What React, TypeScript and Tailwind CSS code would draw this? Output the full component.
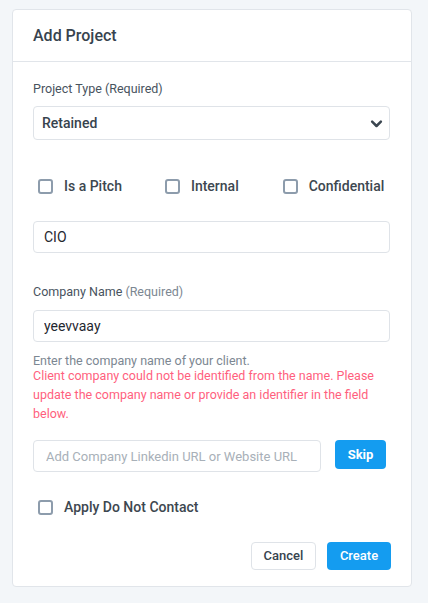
import React, { useState } from 'react';

const Check: React.FC<{ label: string; checked: boolean; onToggle: () => void; className?: string }> = ({ label, checked, onToggle, className }) => (
    <label onClick={onToggle} className={`flex items-center h-5 cursor-pointer ${className || ''}`}>
        <span className={`w-[15px] h-[15px] rounded-[3px] border-2 ${checked ? 'bg-[#149cf0] border-[#149cf0]' : 'border-[#8d9cac] bg-white'}`} />
        <span className="ml-[11px] text-[14px] font-medium text-[#3d4750]">{label}</span>
    </label>
);

export default function App() {
    const [pitch, setPitch] = useState(false);
    const [internal, setInternal] = useState(false);
    const [confidential, setConfidential] = useState(false);
    const [dnc, setDnc] = useState(false);

    return (
        <div className="min-h-[603px] bg-[#f3f6f9] pt-[9px] px-[12px] pb-[17px]" style={{ fontFamily: 'Roboto, "Noto Sans", sans-serif' }}>
            <div className="w-[400px] bg-white border border-[#e1e5ea] rounded-[4px]">
                {/* header */}
                <div className="h-[52px] flex items-center px-[20px] border-b border-[#e1e5ea]">
                    <h2 className="text-[16px] font-medium text-[#37434e]">Add Project</h2>
                </div>

                <div className="px-[20px] pt-[18px] pb-[16px]">
                    <div className="text-[12.5px] leading-[18px] text-[#48535e]">Project Type (Required)</div>
                    <div className="mt-[8px] h-[34px] w-[357px] border border-[#dfe3e8] rounded-[4px] flex items-center justify-between pl-[8px] pr-[5px]">
                        <span className="text-[14px] font-medium text-[#37434e]">Retained</span>
                        <svg width="15" height="15" viewBox="0 0 24 24" fill="none" stroke="#3b4650" strokeWidth="4" strokeLinecap="round" strokeLinejoin="round">
                            <path d="M5 9l7 7 7-7" />
                        </svg>
                    </div>

                    <div className="mt-[36px] flex items-center">
                        <Check className="ml-[5px]" label="Is a Pitch" checked={pitch} onToggle={() => setPitch(!pitch)} />
                        <Check className="ml-[43px]" label="Internal" checked={internal} onToggle={() => setInternal(!internal)} />
                        <Check className="ml-[44px]" label="Confidential" checked={confidential} onToggle={() => setConfidential(!confidential)} />
                    </div>

                    <input defaultValue="CIO" className="mt-[25px] block h-[32px] w-[357px] border border-[#dfe3e8] rounded-[4px] px-[10px] text-[14px] text-[#1f2730] outline-none" />

                    <div className="mt-[30px] text-[12.5px] leading-[18px] text-[#48535e]">
                        Company Name <span className="text-[#7c8792]">(Required)</span>
                    </div>
                    <input defaultValue="yeevvaay" className="mt-[9px] block h-[32px] w-[357px] border border-[#dfe3e8] rounded-[4px] px-[10px] text-[14px] text-[#1f2730] outline-none" />

                    <div className="mt-[13px] text-[12.5px] leading-[12px] text-[#7c8792]">Enter the company name of your client.</div>
                    <div className="-mt-px text-[12.5px] leading-[19px] text-[#ff5f7e] w-[345px]">
                        Client company could not be identified from the name. Please update the company name or provide an identifier in the field below.
                    </div>

                    <div className="mt-[17px] flex items-start">
                        <input placeholder="Add Company Linkedin URL or Website URL" className="block h-[32px] w-[288px] border border-[#dfe3e8] rounded-[4px] px-[12px] text-[13px] text-[#1f2730] placeholder:text-[#a8b0b8] outline-none" />
                        <button className="ml-[14px] h-[29px] w-[51px] rounded-[4px] bg-[#149cf0] text-white text-[13px] font-bold">Skip</button>
                    </div>

                    <Check className="mt-[25px] ml-[5px]" label="Apply Do Not Contact" checked={dnc} onToggle={() => setDnc(!dnc)} />

                    <div className="mt-[25px] flex justify-end gap-[11px]">
                        <button className="h-[28px] w-[65px] rounded-[4px] border border-[#dfe3e8] bg-white text-[13px] font-medium text-[#37434e]">Cancel</button>
                        <button className="h-[28px] w-[64px] rounded-[4px] bg-[#149cf0] text-white text-[13px] font-medium">Create</button>
                    </div>
                </div>
            </div>
        </div>
    );
}
